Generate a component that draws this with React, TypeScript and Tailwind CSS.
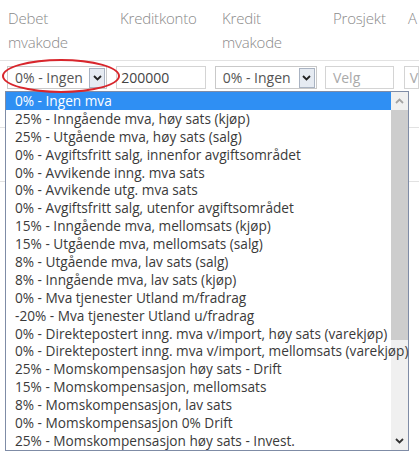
import React from 'react';

const MVA_OPTIONS = [
  '0% - Ingen mva',
  '25% - Inngående mva, høy sats (kjøp)',
  '25% - Utgående mva, høy sats (salg)',
  '0% - Avgiftsfritt salg, innenfor avgiftsområdet',
  '0% - Avvikende inng. mva sats',
  '0% - Avvikende utg. mva sats',
  '0% - Avgiftsfritt salg, utenfor avgiftsområdet',
  '15% - Inngående mva, mellomsats (kjøp)',
  '15% - Utgående mva, mellomsats (salg)',
  '8% - Utgående mva, lav sats (salg)',
  '8% - Inngående mva, lav sats (kjøp)',
  '0% - Mva tjenester Utland m/fradrag',
  '-20% - Mva tjenester Utland u/fradrag',
  '0% - Direktepostert inng. mva v/import, høy sats (varekjøp)',
  '0% - Direktepostert inng. mva v/import, mellomsats (varekjøp)',
  '25% - Momskompensasjon høy sats - Drift',
  '15% - Momskompensasjon, mellomsats',
  '8% - Momskompensasjon, lav sats',
  '0% - Momskompensasjon 0% Drift',
  '25% - Momskompensasjon høy sats - Invest.',
];

const Chevron = ({ up = false, className = '' }: { up?: boolean; className?: string }) => (
  <svg width="9" height="6" viewBox="0 0 9 6" className={className}>
    <path
      d={up ? 'M1 5 L4.5 1.5 L8 5' : 'M1 1 L4.5 4.5 L8 1'}
      fill="none"
      stroke="currentColor"
      strokeWidth="1.8"
    />
  </svg>
);

const SelectBox = ({ value, width }: { value: string; width: string }) => (
  <div className={`${width} h-[23px] border border-[#c9c9c9] bg-white flex items-center justify-between pl-[7px] pr-[1px]`}>
    <span className="text-[14px] text-[#555]">{value}</span>
    <div className="w-[16px] h-[20px] border border-[#a9b3c2] bg-[#e6ebf2] flex items-center justify-center text-[#222]">
      <Chevron />
    </div>
  </div>
);

export default function App() {
  return (
    <div className="relative w-[419px] h-[455px] overflow-hidden bg-white font-['Open_Sans',sans-serif]">
      {/* Table header */}
      <div className="flex pt-[6px] pb-[6px] border-b border-[#e2e2e2] text-[15px] leading-[24px] font-light tracking-[-0.2px] text-[#8a8a8a] whitespace-nowrap">
        <div className="w-[120px] pl-[8px]">Debet<br />mvakode</div>
        <div className="w-[102px]">Kreditkonto</div>
        <div className="w-[111px]">Kredit<br />mvakode</div>
        <div className="w-[75px]">Prosjekt</div>
        <div>A</div>
      </div>

      {/* Input row */}
      <div className="h-[67px] border-b border-[#e2e2e2] pt-[5px] flex items-start whitespace-nowrap">
        <div className="pl-[7px] w-[118px]">
          <SelectBox value="0% - Ingen" width="w-[100px]" />
        </div>
        <div className="w-[100px]">
          <div className="w-[90px] h-[23px] border border-[#d4d4d4] flex items-center pl-[4px] text-[14px] text-[#444]">200000</div>
        </div>
        <div className="w-[112px]">
          <SelectBox value="0% - Ingen" width="w-[102px]" />
        </div>
        <div className="w-[80px]">
          <div className="w-[69px] h-[23px] border border-[#d4d4d4] flex items-center pl-[7px] text-[14px] text-[#aaa]">Velg</div>
        </div>
        <div className="flex-1">
          <div className="h-[23px] border border-[#d4d4d4] flex items-center pl-[5px] text-[14px] text-[#aaa]">V</div>
        </div>
      </div>
      <div className="h-[54px] border-b border-[#e2e2e2]" />

      {/* Red annotation ring */}
      <div className="absolute left-[2px] top-[59px] w-[118px] h-[34px] rounded-[50%] border-[2.5px] border-[#d8262c] z-20" />

      {/* Open dropdown list */}
      <div className="absolute left-[5px] top-[91px] w-[404px] border border-[#7f8ca6] bg-white flex z-10">
        <ul className="flex-1 min-w-0">
          {MVA_OPTIONS.map((opt, i) => (
            <li
              key={opt}
              className={`relative h-[17.9px] leading-[17.9px] pl-[9px] text-[13.65px] whitespace-nowrap ${
                i === 0 ? 'bg-[#2f8ff3] text-white' : 'text-[#3a3a3a]'
              }`}
            >
              {opt}
            </li>
          ))}
        </ul>
        <div className="w-[17px] shrink-0 bg-[#f0f0f0] flex flex-col">
          <div className="h-[18px] flex items-center justify-center text-[#a3a3a3]">
            <Chevron up />
          </div>
          <div className="h-[230px] bg-[#cdcdcd]" />
          <div className="flex-1" />
          <div className="h-[18px] flex items-center justify-center text-[#333]">
            <Chevron />
          </div>
        </div>
      </div>
    </div>
  );
}
